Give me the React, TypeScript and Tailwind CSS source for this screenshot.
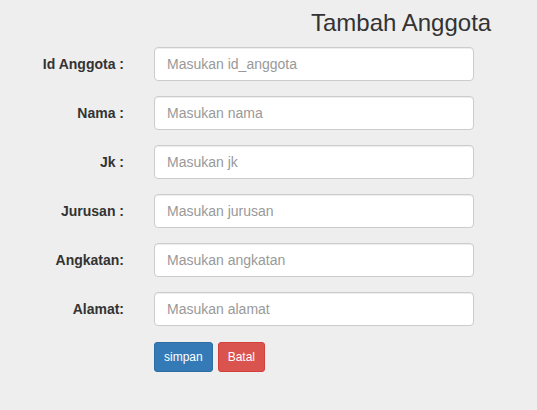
const fields = [
  { label: "Id Anggota :", placeholder: "Masukan id_anggota" },
  { label: "Nama :", placeholder: "Masukan nama" },
  { label: "Jk :", placeholder: "Masukan jk" },
  { label: "Jurusan :", placeholder: "Masukan jurusan" },
  { label: "Angkatan:", placeholder: "Masukan angkatan" },
  { label: "Alamat:", placeholder: "Masukan alamat" },
];

export default function App() {
  return (
    <div className="min-h-[410px] w-[537px] bg-[#eeeeee] font-['Liberation_Sans',Arial,sans-serif] text-[14px] text-[#333]">
      <h3 className="pl-[311px] pt-[10px] text-[24px] leading-[26.4px] font-normal">
        Tambah Anggota
      </h3>
      <form className="mt-[11px] flex flex-col gap-[15px]">
        {fields.map((f) => (
          <div key={f.label} className="flex items-center">
            <label className="w-[124px] text-right font-bold leading-[20px]">
              {f.label}
            </label>
            <input
              type="text"
              placeholder={f.placeholder}
              className="ml-[30px] h-[34px] w-[320px] rounded-[4px] border border-[#cccccc] bg-white px-[12px] py-[6px] text-[14px] text-[#555] shadow-[inset_0_1px_1px_rgba(0,0,0,0.075)] outline-none placeholder:text-[#999]"
            />
          </div>
        ))}
        <div className="mt-[1px] flex gap-[5px] pl-[154px]">
          <button
            type="button"
            className="h-[30px] rounded-[3px] border border-[#2e6da4] bg-[#337ab7] px-[9px] text-[12px] leading-[18px] text-white"
          >
            simpan
          </button>
          <button
            type="button"
            className="h-[30px] rounded-[3px] border border-[#d43f3a] bg-[#d9534f] px-[9px] text-[12px] leading-[18px] text-white"
          >
            Batal
          </button>
        </div>
      </form>
    </div>
  );
}
